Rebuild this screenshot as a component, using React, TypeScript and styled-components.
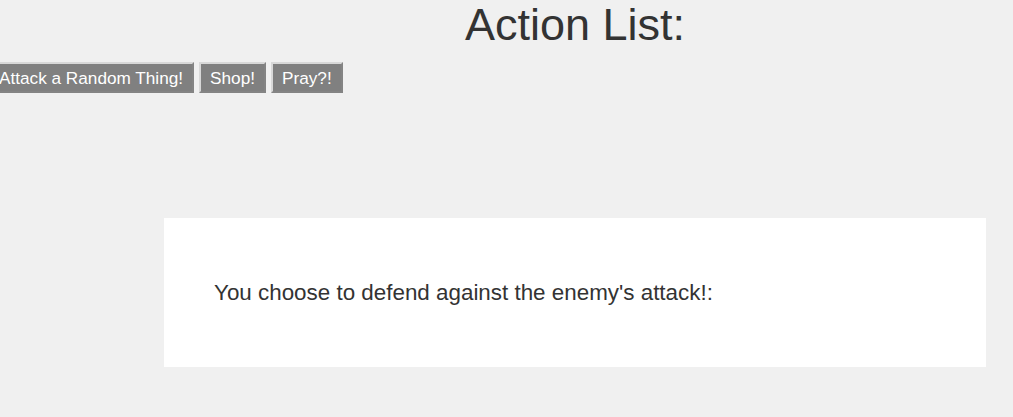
import styled, { createGlobalStyle } from "styled-components";

const Global = createGlobalStyle`
  html, body {
    margin: 0;
    padding: 0;
    background: #f0f0f0;
    font-family: "Liberation Sans", Arial, sans-serif;
    color: #333333;
  }
`;

const Page = styled.div`
  width: 1013px;
  height: 417px;
  overflow: hidden;
`;

const Title = styled.h1`
  margin: 0;
  padding-left: 164px;
  padding-right: 27px;
  text-align: center;
  font-size: 45px;
  font-weight: normal;
  line-height: 50px;
`;

const Actions = styled.div`
  display: flex;
  gap: 5px;
  margin: 12px 0 0 -12px;
`;

const ActionButton = styled.button`
  font-family: "Liberation Sans", Arial, sans-serif;
  font-size: 17.2px;
  color: #ffffff;
  background: #808080;
  border: 2px outset #d8d8d8;
  padding: 4px 9px;
  height: 31px;
  cursor: pointer;
`;

const Panel = styled.div`
  margin: 125px 27px 0 164px;
  height: 149px;
  background: #ffffff;
  display: flex;
  align-items: center;
  padding: 0 50px;
  box-sizing: border-box;
`;

const Message = styled.p`
  margin: 0;
  font-size: 22.4px;
`;

export default function App() {
  return (
    <Page>
      <Global />
      <Title>Action List:</Title>
      <Actions>
        <ActionButton>Attack a Random Thing!</ActionButton>
        <ActionButton>Shop!</ActionButton>
        <ActionButton>Pray?!</ActionButton>
      </Actions>
      <Panel>
        <Message>You choose to defend against the enemy's attack!:</Message>
      </Panel>
    </Page>
  );
}
